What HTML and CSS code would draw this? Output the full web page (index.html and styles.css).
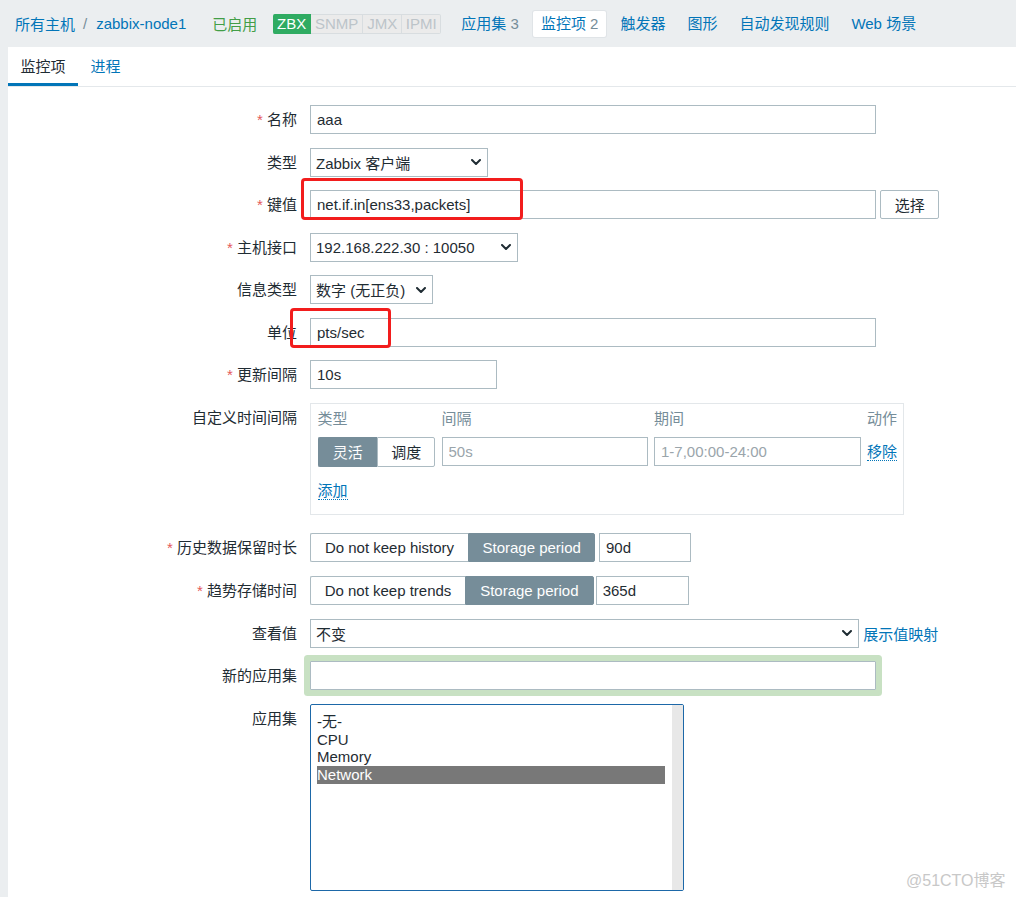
FILE: index.html
```html
<!DOCTYPE html>
<html lang="zh-CN">
<head>
<meta charset="utf-8">
<title>监控项</title>
<link rel="stylesheet" href="styles.css">
</head>
<body>
<header class="topbar">
  <nav class="breadcrumbs">
    <a class="link">所有主机</a><span class="sep">/</span><a class="link">zabbix-node1</a>
  </nav>
  <span class="status-enabled">已启用</span>
  <div class="badges">
    <span class="badge on b-zbx">ZBX</span><span class="badge b-snmp">SNMP</span><span class="badge b-jmx">JMX</span><span class="badge b-ipmi">IPMI</span>
  </div>
  <ul class="host-nav">
    <li><a class="link">应用集</a> <span class="count">3</span></li>
    <li class="selected"><a class="link">监控项</a> <span class="count">2</span></li>
    <li><a class="link">触发器</a></li>
    <li><a class="link">图形</a></li>
    <li><a class="link">自动发现规则</a></li>
    <li><a class="link">Web 场景</a></li>
  </ul>
</header>

<main class="panel">
  <div class="tabs">
    <span class="tab active">监控项</span>
    <span class="tab">进程</span>
  </div>

  <form class="form">
    <div class="row">
      <label class="label"><span class="asterisk">*</span> 名称</label>
      <div class="ctrl"><input class="input w-wide" type="text" value="aaa" readonly></div>
    </div>

    <div class="row">
      <label class="label">类型</label>
      <div class="ctrl">
        <div class="select w-type"><span>Zabbix 客户端</span><svg class="chev" viewBox="0 0 10 6" width="10" height="6"><polyline points="1,1 5,5 9,1"/></svg></div>
      </div>
    </div>

    <div class="row">
      <label class="label"><span class="asterisk">*</span> 键值</label>
      <div class="ctrl">
        <input class="input w-wide" type="text" value="net.if.in[ens33,packets]" readonly>
        <button class="btn-alt" type="button">选择</button>
      </div>
    </div>

    <div class="row">
      <label class="label"><span class="asterisk">*</span> 主机接口</label>
      <div class="ctrl">
        <div class="select w-iface"><span>192.168.222.30 : 10050</span><svg class="chev" viewBox="0 0 10 6" width="10" height="6"><polyline points="1,1 5,5 9,1"/></svg></div>
      </div>
    </div>

    <div class="row">
      <label class="label">信息类型</label>
      <div class="ctrl">
        <div class="select w-info"><span>数字 (无正负)</span><svg class="chev" viewBox="0 0 10 6" width="10" height="6"><polyline points="1,1 5,5 9,1"/></svg></div>
      </div>
    </div>

    <div class="row">
      <label class="label">单位</label>
      <div class="ctrl"><input class="input w-wide" type="text" value="pts/sec" readonly></div>
    </div>

    <div class="row">
      <label class="label"><span class="asterisk">*</span> 更新间隔</label>
      <div class="ctrl"><input class="input w-delay" type="text" value="10s" readonly></div>
    </div>

    <div class="row row-interval">
      <label class="label">自定义时间间隔</label>
      <div class="ctrl">
        <div class="interval-box">
          <div class="interval-grid">
            <span class="th">类型</span>
            <span class="th">间隔</span>
            <span class="th">期间</span>
            <span class="th">动作</span>
            <div class="seg">
              <span class="seg-btn on w-flex">灵活</span><span class="seg-btn w-sched">调度</span>
            </div>
            <input class="input ph" type="text" value="50s" readonly>
            <input class="input ph" type="text" value="1-7,00:00-24:00" readonly>
            <a class="link dotted remove">移除</a>
          </div>
          <a class="link dotted add">添加</a>
        </div>
      </div>
    </div>

    <div class="row">
      <label class="label"><span class="asterisk">*</span> 历史数据保留时长</label>
      <div class="ctrl">
        <div class="seg">
          <span class="seg-btn w-hist-off">Do not keep history</span><span class="seg-btn on w-hist-on">Storage period</span>
        </div>
        <input class="input w-hist-val" type="text" value="90d" readonly>
      </div>
    </div>

    <div class="row">
      <label class="label"><span class="asterisk">*</span> 趋势存储时间</label>
      <div class="ctrl">
        <div class="seg">
          <span class="seg-btn w-trend-off">Do not keep trends</span><span class="seg-btn on w-trend-on">Storage period</span>
        </div>
        <input class="input w-trend-val" type="text" value="365d" readonly>
      </div>
    </div>

    <div class="row">
      <label class="label">查看值</label>
      <div class="ctrl">
        <div class="select w-valuemap"><span>不变</span><svg class="chev" viewBox="0 0 10 6" width="10" height="6"><polyline points="1,1 5,5 9,1"/></svg></div>
        <a class="link valuemap-link">展示值映射</a>
      </div>
    </div>

    <div class="row">
      <label class="label">新的应用集</label>
      <div class="ctrl"><input class="input w-wide halo" type="text" value="" readonly></div>
    </div>

    <div class="row">
      <label class="label">应用集</label>
      <div class="ctrl">
        <div class="listbox">
          <ul class="options">
            <li>-无-</li>
            <li>CPU</li>
            <li>Memory</li>
            <li class="picked">Network</li>
          </ul>
          <div class="scroll-track"></div>
        </div>
      </div>
    </div>
  </form>
</main>

<div class="annot annot-key"></div>
<div class="annot annot-unit"></div>
<div class="watermark">@51CTO博客</div>
</body>
</html>
```

FILE: styles.css
```css
* { box-sizing: border-box; }

html, body { margin: 0; padding: 0; }

body {
  position: relative;
  min-height: 897px;
  background: #ebeef0;
  color: #1f2c33;
  font-family: "Liberation Sans", Arial, "Noto Sans CJK SC", sans-serif;
  font-size: 15px;
}

.link { color: #0275b8; text-decoration: none; cursor: pointer; }

/* ---------- top bar ---------- */
.topbar {
  height: 47px;
  display: flex;
  align-items: center;
  padding-left: 15px;
  white-space: nowrap;
}

.breadcrumbs { display: flex; align-items: center; }
.sep { color: #768d99; margin: 0 9px 0 8px; }

.status-enabled { color: #429e47; margin-left: 26px; }

.badges { display: flex; margin-left: 16px; }
.badge {
  height: 20px;
  line-height: 18px;
  text-align: center;
  border: 1px solid #d8dde0;
  border-left: none;
  background: #ebebeb;
  color: #bcc4c9;
}
.badge.on {
  background: #2fab62;
  border-color: #2fab62;
  color: #fff;
  border-radius: 2px 0 0 2px;
}
.b-zbx { width: 37.6px; }
.b-snmp { width: 52.4px; }
.b-jmx { width: 39px; }
.b-ipmi { width: 39px; border-radius: 0 2px 2px 0; }

.host-nav {
  display: flex;
  list-style: none;
  margin: 0 0 0 12.5px;
  padding: 0;
  gap: 6.8px;
}
.host-nav li {
  height: 26px;
  line-height: 26px;
  padding: 0 7.6px;
  border-radius: 2px;
}
.host-nav li.selected {
  background: #fff;
  box-shadow: 0 0 0 1px #e0e4e7;
}
.count { color: #768d99; }

/* ---------- panel ---------- */
.panel {
  margin-left: 8px;
  background: #fff;
  min-height: 850px;
}

.tabs {
  display: flex;
  border-bottom: 1px solid #e4e8eb;
}
.tab {
  padding: 3px 12.5px 0;
  line-height: 33px;
  border-bottom: 3px solid transparent;
  color: #0275b8;
}
.tab.active {
  color: #1f2c33;
  border-bottom-color: #0275b8;
}

/* ---------- form ---------- */
.form {
  display: flex;
  flex-direction: column;
  gap: 13.5px;
  padding-top: 18px;
  padding-bottom: 6px;
}

.row {
  display: grid;
  grid-template-columns: 289px 1fr;
  column-gap: 13px;
  align-items: start;
}
.row-interval { margin-bottom: 4.7px; }

.label {
  line-height: 29px;
  text-align: right;
  white-space: nowrap;
}
.asterisk { color: #e45959; }

.ctrl {
  display: flex;
  align-items: center;
  min-height: 29px;
}

.input {
  height: 29px;
  border: 1px solid #acbbc2;
  border-radius: 0;
  padding: 0 6px;
  margin: 0;
  background: #fff;
  color: #1f2c33;
  font: inherit;
  outline: none;
}
.input.ph { color: #9aa5ab; }

.w-wide { width: 566px; }
.w-delay { width: 186.5px; }

.btn-alt {
  height: 29px;
  width: 59px;
  margin-left: 4.3px;
  border: 1px solid #acbbc2;
  border-radius: 2px;
  background: #fff;
  color: #1f2c33;
  font: inherit;
  padding: 0;
}

.select {
  height: 29px;
  display: flex;
  align-items: center;
  justify-content: space-between;
  border: 1px solid #acbbc2;
  padding: 0 6px 0 5px;
  background: #fff;
  white-space: nowrap;
}
.chev { flex: none; margin-left: 8px; }
.chev polyline { fill: none; stroke: #1f2c33; stroke-width: 2; stroke-linecap: round; stroke-linejoin: round; }

.w-type { width: 178px; }
.w-iface { width: 208.3px; }
.w-info { width: 122.7px; }
.w-valuemap { width: 548.7px; }

.valuemap-link { margin-left: 4.6px; }

/* ---------- custom interval ---------- */
.interval-box {
  width: 594px;
  border: 1px solid #e3e7ea;
  padding: 3.7px 6px 13.5px 6.5px;
}
.interval-grid {
  display: grid;
  grid-template-columns: 118px 206.5px 207px 30px;
  column-gap: 6px;
  row-gap: 6px;
  align-items: center;
}
.th {
  line-height: 24px;
  color: #768d99;
  white-space: nowrap;
}
.interval-grid .input { width: 100%; }

.dotted {
  line-height: 17px;
  border-bottom: 1px dotted #0275b8;
  white-space: nowrap;
}
.remove { justify-self: start; }
.add {
  display: inline-block;
  margin-top: 15.5px;
}

/* ---------- segmented buttons ---------- */
.seg { display: flex; }
.seg-btn {
  height: 29.5px;
  display: flex;
  align-items: center;
  justify-content: center;
  border: 1px solid #acbbc2;
  background: #fff;
  color: #1f2c33;
  white-space: nowrap;
}
.seg-btn:first-child { border-radius: 2px 0 0 2px; border-right: none; }
.seg-btn:last-child { border-radius: 0 2px 2px 0; }
.seg-btn.on {
  background: #768d99;
  border-color: #768d99;
  color: #fff;
}

.w-flex { width: 59.7px; }
.w-sched { width: 58.3px; }
.w-hist-off { width: 158px; }
.w-hist-on { width: 127.4px; }
.w-trend-off { width: 155px; }
.w-trend-on { width: 128.7px; }
.w-hist-val { width: 92.4px; margin-left: 3.6px; }
.w-trend-val { width: 93.7px; margin-left: 2px; }

/* ---------- new application halo ---------- */
.halo {
  border-radius: 1px;
  box-shadow: 0 0 0 6px #c8e1c3;
}

/* ---------- listbox ---------- */
.listbox {
  width: 374px;
  height: 187.4px;
  display: flex;
  border: 1px solid #1d68a8;
  border-radius: 2px;
  background: #fff;
  overflow: hidden;
}
.options {
  flex: 1;
  list-style: none;
  margin: 0;
  padding: 8.2px 6.7px 0 6px;
}
.options li {
  line-height: 17.7px;
  height: 17.7px;
  color: #1f2c33;
  white-space: nowrap;
}
.options li.picked {
  background: #787878;
  color: #fff;
}
.scroll-track {
  width: 11px;
  background: #e8e8e8;
}

/* ---------- overlays ---------- */
.annot {
  position: absolute;
  border: 3px solid #f21d1d;
  border-radius: 4px;
}
.annot-key { left: 300.7px; top: 178.3px; width: 222.6px; height: 42px; }
.annot-unit { left: 290px; top: 308.3px; width: 100.7px; height: 39.4px; }

.watermark {
  position: absolute;
  left: 906px;
  top: 871px;
  font-size: 16px;
  line-height: 20px;
  color: #c8c8c8;
  white-space: nowrap;
}
```
